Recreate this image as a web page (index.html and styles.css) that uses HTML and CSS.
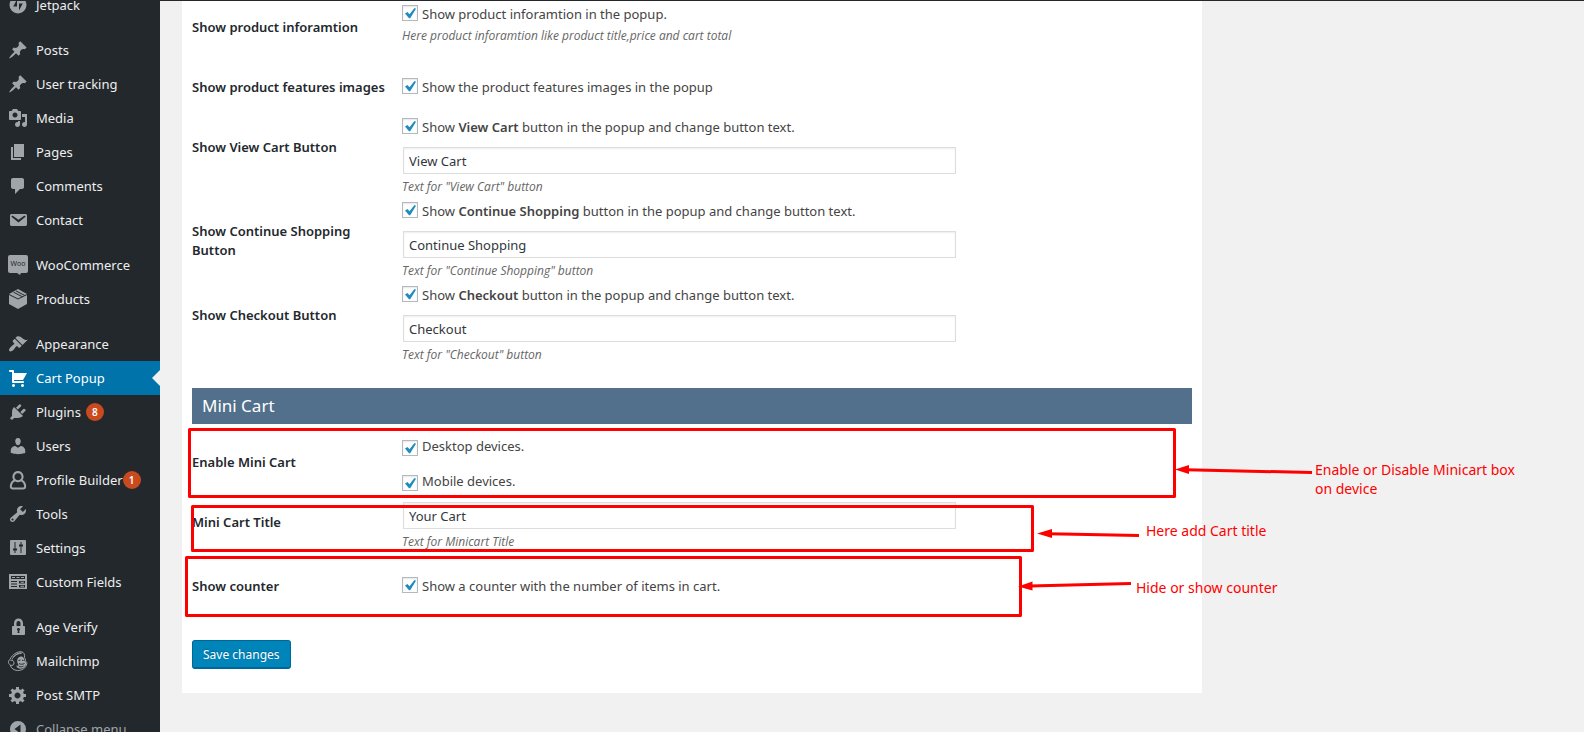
FILE: index.html
```html
<!DOCTYPE html>
<html lang="en">
<head>
<meta charset="utf-8">
<title>Cart Popup settings</title>
<link rel="stylesheet" href="styles.css">
</head>
<body>
<div class="admin">
  <nav class="sidebar" aria-label="Main menu">
    <ul class="menu">
      <li><a class="menu-link" href="#"><svg class="icon" viewBox="0 0 20 20"><path fill-rule="evenodd" d="M10 1.500a8.500 8.500 0 1 0 0 17 8.500 8.500 0 0 0 0-17zM9 11.600H5.200L9 4.400zM11 8.400h3.800L11 15.600z"/></svg>Jetpack</a></li>
      <li class="group"><a class="menu-link" href="#"><svg class="icon" viewBox="0 0 20 20"><path d="M10.440 3.020l1.820-1.820 6.360 6.350-1.830 1.820c-1.050-.68-2.480-.57-3.410.36l-.75.75c-.92.93-1.040 2.350-.35 3.410l-1.830 1.820-2.410-2.410-2.800 2.790c-.42.42-3.380 2.710-3.800 2.290s1.860-3.390 2.280-3.810l2.790-2.790L4.100 9.360l1.830-1.820c1.050.69 2.480.57 3.400-.36l.75-.75c.93-.92 1.050-2.350.36-3.410z"/></svg>Posts</a></li>
      <li><a class="menu-link" href="#"><svg class="icon" viewBox="0 0 20 20"><path d="M10.440 3.020l1.820-1.820 6.360 6.350-1.830 1.820c-1.050-.68-2.480-.57-3.410.36l-.75.75c-.92.93-1.040 2.350-.35 3.410l-1.830 1.820-2.410-2.410-2.800 2.790c-.42.42-3.380 2.710-3.800 2.290s1.860-3.390 2.280-3.810l2.790-2.790L4.100 9.360l1.830-1.820c1.050.69 2.480.57 3.400-.36l.75-.75c.93-.92 1.050-2.350.36-3.410z"/></svg>User tracking</a></li>
      <li><a class="menu-link" href="#"><svg class="icon" viewBox="0 0 20 20"><path d="M13 11V4c0-.55-.45-1-1-1h-1.670L9 1H5L3.670 3H2c-.55 0-1 .45-1 1v7c0 .55.45 1 1 1h10c.55 0 1-.45 1-1zM7 4.500c1.380 0 2.500 1.120 2.500 2.500S8.380 9.500 7 9.500 4.500 8.380 4.500 7 5.620 4.500 7 4.500zM14 6h5v10.500c0 1.380-1.120 2.500-2.500 2.500S14 17.880 14 16.500s1.120-2.500 2.500-2.500c.17 0 .34.02.5.05V9h-3V6zm-4 8.050V13h2v3.500c0 1.380-1.120 2.500-2.500 2.500S7 17.880 7 16.500 8.120 14 9.500 14c.17 0 .34.02.5.05z"/></svg>Media</a></li>
      <li><a class="menu-link" href="#"><svg class="icon" viewBox="0 0 20 20"><path d="M6 15V2h10v13H6zm-1 1h8v2H3V5h2v11z"/></svg>Pages</a></li>
      <li><a class="menu-link" href="#"><svg class="icon" viewBox="0 0 20 20"><path d="M5 2h9c1.100 0 2 .9 2 2v7c0 1.100-.9 2-2 2h-2l-5 5v-5H5c-1.100 0-2-.9-2-2V4c0-1.100.9-2 2-2z"/></svg>Comments</a></li>
      <li><a class="menu-link" href="#"><svg class="icon" viewBox="0 0 20 20"><path d="M3.870 4h13.250C18.370 4 19 4.590 19 5.790v8.420c0 1.190-.63 1.790-1.880 1.790H3.870c-1.250 0-1.880-.6-1.880-1.790V5.790c0-1.200.63-1.790 1.880-1.790zm6.620 8.600l6.740-5.530c.24-.2.43-.66.13-1.070-.29-.41-.82-.42-1.170-.17l-5.700 3.860L4.800 5.830c-.35-.25-.88-.24-1.170.17-.3.41-.11.87.13 1.070z"/></svg>Contact</a></li>
      <li class="group"><a class="menu-link" href="#"><svg class="icon" viewBox="0 0 20 20"><path d="M2 0h16a2 2 0 0 1 2 2v14a2 2 0 0 1-2 2h-5l-1 2-3-2H2a2 2 0 0 1-2-2V2a2 2 0 0 1 2-2z"/><text class="woo-mark" x="10" y="11" text-anchor="middle">Woo</text></svg>WooCommerce</a></li>
      <li><a class="menu-link" href="#"><svg class="icon" viewBox="0 0 20 20"><path d="M10 0l9 5v10l-9 5-9-5V5z"/><path class="cut" d="M1 5.500l9 4.500 9-4.500M5.500 3.200l9 4.600M7.800 1.800l9 4.700"/></svg>Products</a></li>
      <li class="group"><a class="menu-link" href="#"><svg class="icon" viewBox="0 0 20 20"><path d="M14.480 11.060L7.410 3.990l1.500-1.500c.5-.56 2.300-.47 3.510.32 1.210.8 1.430 1.280 2.910 2.100 1.180.64 2.450 1.260 4.450.85zm-.71.71L6.700 4.700 4.930 6.470c-.39.39-.39 1.020 0 1.410l1.060 1.060c.39.39.39 1.030 0 1.420-.6.6-1.430 1.110-2.210 1.690-.35.26-.7.53-1.010.84C1.430 14.230.4 16.080 1.400 17.070c.99 1 2.840-.03 4.180-1.360.31-.31.58-.66.85-1.020.57-.78 1.080-1.610 1.690-2.210.39-.39 1.020-.39 1.410 0l1.060 1.060c.39.39 1.020.39 1.410 0z"/></svg>Appearance</a></li>
      <li><a class="menu-link current" href="#" aria-current="page"><svg class="icon" viewBox="0 0 20 20"><path d="M6 13h9c.55 0 1 .45 1 1s-.45 1-1 1H5c-.55 0-1-.45-1-1V4H2c-.55 0-1-.45-1-1s.45-1 1-1h3c.55 0 1 .45 1 1v2h13l-4 7H6v1zm-.5 3c.83 0 1.500.67 1.500 1.500S6.330 19 5.500 19 4 18.330 4 17.500 4.670 16 5.500 16zm9 0c.83 0 1.500.67 1.500 1.500s-.67 1.500-1.500 1.500-1.500-.67-1.500-1.500.67-1.500 1.500-1.500z"/></svg>Cart Popup</a></li>
      <li><a class="menu-link" href="#"><svg class="icon" viewBox="0 0 20 20"><path d="M13.110 4.360L9.870 7.600 8 5.730l3.240-3.240c.35-.34 1.050-.2 1.560.32.52.51.66 1.210.31 1.550zm-8 1.770l.91-1.120 9.010 9.010-1.190.84c-.71.71-2.630 1.160-3.820 1.160H6.140L4.900 17.260c-.59.59-1.540.59-2.120 0-.59-.58-.59-1.530 0-2.120l1.240-1.240v-3.880c0-1.130.4-3.190 1.090-3.890zm7.260 3.970l3.240-3.240c.34-.35 1.040-.21 1.550.31.52.51.66 1.210.31 1.550l-3.240 3.250z"/></svg>Plugins <span class="count count-spaced">8</span></a></li>
      <li><a class="menu-link" href="#"><svg class="icon" viewBox="0 0 20 20"><path d="M10 9.250c-2.270 0-2.730-3.440-2.730-3.440C7 4.020 7.820 2 9.970 2c2.160 0 2.980 2.020 2.710 3.810 0 0-.41 3.440-2.680 3.440zm0 2.570L12.720 10c2.390 0 4.520 2.330 4.520 4.530v2.490s-3.650 1.130-7.240 1.130c-3.650 0-7.240-1.130-7.240-1.130v-2.490c0-2.250 1.940-4.480 4.470-4.480z"/></svg>Users</a></li>
      <li><a class="menu-link" href="#"><svg class="icon" viewBox="0 0 20 20"><path class="outline" d="M10 2a4.600 4.600 0 0 0-2.800 8.200C4.500 11 3 13.500 2.800 16.500c0 1.300.8 2 2.200 2h10c1.400 0 2.200-.7 2.200-2-.2-3-1.700-5.500-4.400-6.300A4.600 4.600 0 0 0 10 2zM7.200 10.200c1.700 1.200 3.900 1.200 5.600 0"/></svg>Profile Builder<span class="count">1</span></a></li>
      <li><a class="menu-link" href="#"><svg class="icon" viewBox="0 0 20 20"><path d="M16.680 9.770c-1.340 1.340-3.300 1.670-4.950.99l-5.410 6.520c-.99.99-2.590.99-3.580 0s-.99-2.590 0-3.570l6.520-5.420c-.68-1.650-.35-3.610.99-4.950 1.280-1.280 3.120-1.620 4.720-1.060l-2.890 2.890 2.820 2.820 2.860-2.870c.53 1.580.18 3.390-1.080 4.650zM3.810 16.210c.4.39 1.040.39 1.430 0 .4-.4.4-1.040 0-1.430-.39-.4-1.030-.4-1.430 0-.39.39-.39 1.030 0 1.430z"/></svg>Tools</a></li>
      <li><a class="menu-link" href="#"><svg class="icon" viewBox="0 0 20 20"><path fill-rule="evenodd" d="M3 2h14a1 1 0 0 1 1 1v13a1 1 0 0 1-1 1H3a1 1 0 0 1-1-1V3a1 1 0 0 1 1-1zM6.500 4v6.500H5v2h1.500V15h1v-2.500H9v-2H7.500V4zM12.500 4v2.500H11v2h1.500V15h1V8.500H15v-2h-1.500V4z"/></svg>Settings</a></li>
      <li><a class="menu-link" href="#"><svg class="icon" viewBox="0 0 20 20"><path fill-rule="evenodd" d="M1 2h18v15H1zM3 4v3h14V4zM3 9v1h6V9zM3 11.500v1h6v-1zM3 14v1h6v-1zM11 9v2.500h6V9zM11 13v2.500h6V13z"/><path d="M4 5h3v1H4zM8.500 5h3v1h-3zM13 5h3v1h-3zM12.500 9.800H16v1h-3.500zM12.500 13.800H16v1h-3.500z"/></svg>Custom Fields</a></li>
      <li class="group"><a class="menu-link" href="#"><svg class="icon" viewBox="0 0 20 20"><path d="M15 9h1c.55 0 1 .45 1 1v7c0 .55-.45 1-1 1H5c-.55 0-1-.45-1-1v-7c0-.55.45-1 1-1h1V6c0-2.480 2.020-4.500 4.500-4.500S15 3.520 15 6v3zm-2.500 0V6c0-1.100-.9-2-2-2s-2 .9-2 2v3h4zm-1 7l-.36-2.150c.51-.24.86-.75.86-1.350 0-.83-.67-1.500-1.500-1.500s-1.500.67-1.500 1.500c0 .6.35 1.110.86 1.350L9.500 16h2z"/></svg>Age Verify</a></li>
      <li><a class="menu-link" href="#"><svg class="icon" viewBox="0 0 20 20"><path class="thin" d="M16.500 6.500C17 4 16 1 13.500.8 10 0 4 3.500 2 8.500c-2 1-2 4 .2 5.500.8 3.300 4 5.500 7.500 5.500 4.500 0 8.300-2.500 9-6.500.6-1.500-.2-2.500-1.200-2.500.2-1.500-.3-3-1-4zM4 8.500C5.500 5 9 2.500 13 2.500M5.500 6c2-3 5.500-4.500 8.500-4M2.500 9.500c2-.7 3.500.5 3.500 2.500s-1.500 3-3.500 2"/><path d="M9.500 8c1-2 3.200-3 5.200-2 1.500.7 1.800 2.500 1.600 4 1.500.5 2.200 2 1.700 3.500-1 3-3.500 4.500-6 4.200-2-.2-3.500-1.500-3.700-3.200 1 .5 2 .3 2.700-.2-1.500-1.200-2.300-4-1.500-6.300z"/><path class="cut" d="M10.500 9.500l2-.5M14 9.200l1.500.3M11 12.500c1.500 1 3.500 1 5.500 0M11 15.500c1.500.6 3.500.3 4.500-.5"/></svg>Mailchimp</a></li>
      <li><a class="menu-link" href="#"><svg class="icon" viewBox="0 0 20 20"><path d="M18 12h-2.180c-.17.7-.44 1.350-.81 1.930l1.540 1.540-2.100 2.100-1.540-1.540c-.58.36-1.230.63-1.910.79V19H8v-2.180c-.68-.16-1.330-.43-1.910-.79l-1.540 1.540-2.120-2.120 1.540-1.540c-.36-.58-.63-1.230-.79-1.910H1V9.030h2.170c.16-.7.44-1.350.8-1.940L2.430 5.550l2.100-2.100 1.540 1.540c.58-.37 1.240-.64 1.930-.81V2h3v2.180c.68.16 1.330.43 1.910.79l1.540-1.540 2.120 2.120-1.540 1.540c.36.59.64 1.240.8 1.940H18V12zm-8.500 1.500c1.660 0 3-1.340 3-3s-1.340-3-3-3-3 1.340-3 3 1.340 3 3 3z"/></svg>Post SMTP</a></li>
      <li><button class="menu-link collapse" type="button"><svg class="icon" viewBox="0 0 20 20"><path fill-rule="evenodd" d="M10 2a8 8 0 1 0 0 16 8 8 0 0 0 0-16zM12.500 5.500v9L6.500 10z"/></svg>Collapse menu</button></li>
    </ul>
  </nav>

  <main class="content">
    <form class="panel">
      <div class="row">
        <div class="row-title">Show product inforamtion</div>
        <div class="field field-upper">
          <label class="check"><input type="checkbox" checked><span>Show product inforamtion in the popup.</span></label>
          <p class="hint">Here product inforamtion like product title,price and cart total</p>
        </div>
      </div>
      <div class="row">
        <div class="row-title">Show product features images</div>
        <div class="field field-single">
          <label class="check"><input type="checkbox" checked><span>Show the product features images in the popup</span></label>
        </div>
      </div>
      <div class="row">
        <label class="row-title" for="view-cart">Show View Cart Button</label>
        <div class="field">
          <label class="check"><input type="checkbox" checked><span>Show <b>View Cart</b> button in the popup and change button text.</span></label>
          <input class="text after-check" id="view-cart" type="text" value="View Cart">
          <p class="hint">Text for "View Cart" button</p>
        </div>
      </div>
      <div class="row">
        <label class="row-title" for="continue">Show Continue Shopping Button</label>
        <div class="field">
          <label class="check"><input type="checkbox" checked><span>Show <b>Continue Shopping</b> button in the popup and change button text.</span></label>
          <input class="text after-check" id="continue" type="text" value="Continue Shopping">
          <p class="hint">Text for "Continue Shopping" button</p>
        </div>
      </div>
      <div class="row">
        <label class="row-title" for="checkout">Show Checkout Button</label>
        <div class="field">
          <label class="check"><input type="checkbox" checked><span>Show <b>Checkout</b> button in the popup and change button text.</span></label>
          <input class="text after-check" id="checkout" type="text" value="Checkout">
          <p class="hint">Text for "Checkout" button</p>
        </div>
      </div>

      <h2 class="section">Mini Cart</h2>

      <div class="row">
        <div class="row-title">Enable Mini Cart</div>
        <div class="field field-devices">
          <label class="check check-low"><input type="checkbox" checked><span>Desktop devices.</span></label>
          <label class="check check-low"><input type="checkbox" checked><span>Mobile devices.</span></label>
        </div>
      </div>
      <div class="row">
        <label class="row-title" for="cart-title">Mini Cart Title</label>
        <div class="field field-text">
          <input class="text" id="cart-title" type="text" value="Your Cart">
          <p class="hint">Text for Minicart Title</p>
        </div>
      </div>
      <div class="row">
        <div class="row-title">Show counter</div>
        <div class="field field-single">
          <label class="check"><input type="checkbox" checked><span>Show a counter with the number of items in cart.</span></label>
        </div>
      </div>
      <button class="save" type="button">Save changes</button>
    </form>
  </main>

  <svg class="marks" width="1584" height="732" viewBox="0 0 1584 732" aria-hidden="true">
    <g class="boxes">
      <rect x="189.500" y="429.500" width="985" height="67"/>
      <rect x="192.500" y="506.500" width="840" height="44"/>
      <rect x="186.500" y="557.500" width="834" height="58"/>
      <path d="M1186 469.800L1312 472.500M1049 533.800L1139 535.500M1030 586L1131 583.500"/>
    </g>
    <path class="heads" d="M1175 469.500l14-4.500v9zM1037 533.500l15-4.500v9zM1018 586.500l14.500-5v9z"/>
  </svg>
  <p class="note note-device">Enable or Disable Minicart box on device</p>
  <p class="note note-title">Here add Cart title</p>
  <p class="note note-counter">Hide or show counter</p>
</div>
</body>
</html>
```
FILE: styles.css
```css
* { box-sizing: border-box; }

body {
  margin: 0;
  background: #f1f1f1;
  color: #444;
  font: 13px/19px "Noto Sans", "Open Sans", sans-serif;
}

p, h2, ul { margin: 0; padding: 0; }

.admin {
  position: relative;
  display: flex;
  height: 100vh;
  overflow: hidden;
  border-top: 1px solid #23282d;
}

/* Sidebar */
.sidebar { flex: 0 0 160px; background: #23282d; }
.menu { list-style: none; margin-top: -13px; }
.group { margin-top: 11px; }

.menu-link {
  position: relative;
  display: flex;
  align-items: center;
  width: 100%;
  height: 34px;
  padding: 0 0 0 8px;
  border: 0;
  background: none;
  color: #eee;
  font: inherit;
  text-decoration: none;
  white-space: nowrap;
}

.icon {
  flex: none;
  width: 20px;
  height: 20px;
  margin-right: 8px;
  fill: #a0a5aa;
}
.icon .cut { fill: none; stroke: #23282d; stroke-width: 1; }
.icon .outline { fill: none; stroke: #a0a5aa; stroke-width: 2; }
.icon .thin { fill: none; stroke: #a0a5aa; stroke-width: 1; }
.icon .woo-mark { fill: #23282d; font-size: 7px; }

.current { background: #0073aa; color: #fff; }
.current .icon { fill: #fff; }
.current::after {
  content: "";
  position: absolute;
  right: 0;
  border: 8px solid transparent;
  border-left-width: 0;
  border-right-color: #f1f1f1;
}

.count {
  width: 18px;
  height: 18px;
  border-radius: 9px;
  background: #ca4a1f;
  color: #fff;
  font-size: 10px;
  font-weight: 600;
  line-height: 18px;
  text-align: center;
}
.count-spaced { margin-left: 5px; }
.collapse { color: #a0a5aa; }

/* Settings panel */
.content { flex: 1; padding: 0 22px; }

.panel {
  max-width: 1020px;
  padding: 0 10px 24px;
  background: #fff;
  margin-top: -3px;
}

.row {
  display: grid;
  grid-template-columns: 210px 1fr;
  min-height: 60px;
}

.row-title {
  padding: 20px 10px 0 0;
  color: #23282d;
  font-weight: 600;
}

.field { padding-bottom: 6px; }
.field-upper { padding-top: 7px; }
.field-single { padding-top: 20px; }
.field-text { padding-top: 9px; }
.field-devices { display: grid; gap: 16px; padding: 4px 0 2px; }

.check { display: flex; align-items: flex-start; gap: 4px; }
.check-low { align-items: flex-end; }
.check b { font-weight: 600; }

.check input {
  appearance: none;
  flex: none;
  width: 16px;
  height: 16px;
  margin: 0;
  border: 1px solid #b4b9be;
  background: #fff;
  box-shadow: inset 0 1px 2px rgba(0, 0, 0, .1);
}
.check input:checked {
  background: #fff url("data:image/svg+xml,%3Csvg xmlns='http://www.w3.org/2000/svg' viewBox='0 0 14 14'%3E%3Cpath d='M2 7.500L4.500 6l2 2.200L11.500 2l1.500.8L7.200 12.200H6z' fill='%231e8cbe'/%3E%3C/svg%3E");
}

.text {
  display: block;
  width: 70%;
  height: 27px;
  margin: 0 1px;
  padding: 0 5px;
  border: 1px solid #ddd;
  background: #fff;
  box-shadow: inset 0 1px 2px rgba(0, 0, 0, .07);
  color: #32373c;
  font: inherit;
}
.after-check { margin-top: 10px; }

.hint {
  margin-top: 3px;
  color: #666;
  font-family: "Open Sans", "Noto Sans", sans-serif;
  font-size: 12px;
  font-style: italic;
}
.field-upper .hint { margin-top: 2px; }

.section {
  margin: 18px 0 9px;
  padding: 0 10px;
  background: #52708c;
  color: #fff;
  font-size: 17px;
  font-weight: 400;
  line-height: 36px;
}

.save {
  display: block;
  height: 29px;
  margin-top: 23px;
  padding: 0 10px;
  border: 1px solid #006799;
  border-bottom-width: 2px;
  border-radius: 3px;
  background: #0085ba;
  color: #fff;
  font: inherit;
  font-size: 12px;
  text-shadow: 0 -1px 1px #006799;
}

/* Annotations drawn over the page */
.marks { position: absolute; top: -1px; left: 0; pointer-events: none; }
.boxes { fill: none; stroke: #f00; stroke-width: 3; stroke-linejoin: round; }
.heads { fill: #f00; }

.note { position: absolute; color: #f00; font-size: 14px; }
.note-device { top: 459px; left: 1315px; width: 208px; }
.note-title { top: 520px; left: 1146px; }
.note-counter { top: 577px; left: 1136px; }
```
